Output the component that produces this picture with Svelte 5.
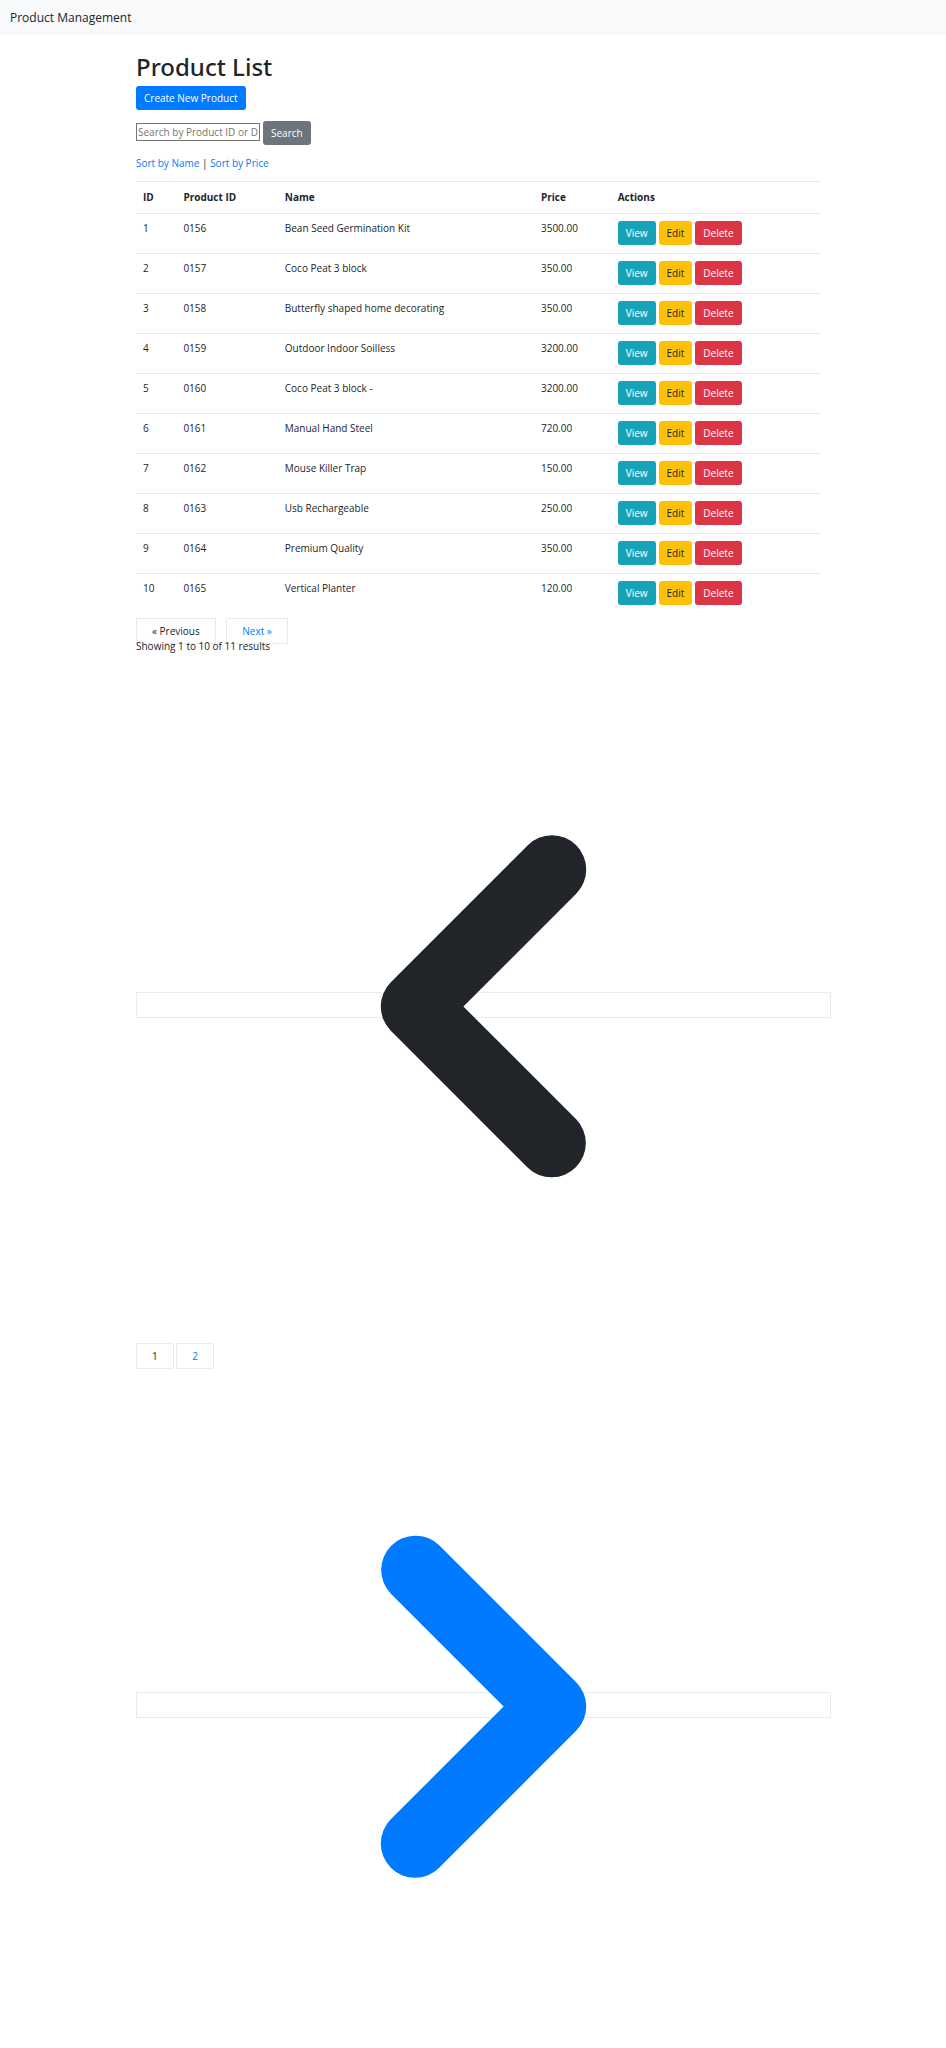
<script>
  const products = [
    { id: 1, code: '0156', name: 'Bean Seed Germination Kit', price: '3500.00' },
    { id: 2, code: '0157', name: 'Coco Peat 3 block', price: '350.00' },
    { id: 3, code: '0158', name: 'Butterfly shaped home decorating', price: '350.00' },
    { id: 4, code: '0159', name: 'Outdoor Indoor Soilless', price: '3200.00' },
    { id: 5, code: '0160', name: 'Coco Peat 3 block -', price: '3200.00' },
    { id: 6, code: '0161', name: 'Manual Hand Steel', price: '720.00' },
    { id: 7, code: '0162', name: 'Mouse Killer Trap', price: '150.00' },
    { id: 8, code: '0163', name: 'Usb Rechargeable', price: '250.00' },
    { id: 9, code: '0164', name: 'Premium Quality', price: '350.00' },
    { id: 10, code: '0165', name: 'Vertical Planter', price: '120.00' }
  ];
  let query = $state('');
</script>

<nav class="navbar"><a class="brand" href="#home">Product Management</a></nav>

<main class="container">
  <h1>Product List</h1>
  <a class="btn primary" href="#create">Create New Product</a>

  <form class="search" onsubmit={(e) => e.preventDefault()}>
    <input type="text" aria-label="Search products" placeholder="Search by Product ID or Description" bind:value={query} />
    <button class="btn secondary" type="submit">Search</button>
  </form>

  <div class="sort"><a href="#name">Sort by Name</a> | <a href="#price">Sort by Price</a></div>

  <table>
    <colgroup>
      <col class="c-id" /><col class="c-code" /><col class="c-name" /><col class="c-price" /><col />
    </colgroup>
    <thead>
      <tr><th>ID</th><th>Product ID</th><th>Name</th><th>Price</th><th>Actions</th></tr>
    </thead>
    <tbody>
      {#each products as p (p.id)}
        <tr>
          <td>{p.id}</td>
          <td>{p.code}</td>
          <td>{p.name}</td>
          <td>{p.price}</td>
          <td>
            <div class="actions">
              <a class="btn info" href="#view">View</a>
              <a class="btn warning" href="#edit">Edit</a>
              <button class="btn danger" type="button">Delete</button>
            </div>
          </td>
        </tr>
      {/each}
    </tbody>
  </table>

  <nav aria-label="Pagination">
    <div>
      <span class="page">« Previous</span>
      <a class="page next" href="#page2">Next »</a>
    </div>
    <p>Showing 1 to 10 of 11 results</p>
    <div>
      <span class="page arrow"><svg viewBox="0 0 20 20" fill="currentColor" aria-hidden="true"><path fill-rule="evenodd" clip-rule="evenodd" d="M12.707 5.293a1 1 0 010 1.414L9.414 10l3.293 3.293a1 1 0 01-1.414 1.414l-4-4a1 1 0 010-1.414l4-4a1 1 0 011.414 0z" /></svg></span>
      <span class="page">1</span>
      <a class="page" href="#page2">2</a>
      <a class="page arrow" href="#page2" aria-label="Next page"><svg viewBox="0 0 20 20" fill="currentColor" aria-hidden="true"><path fill-rule="evenodd" clip-rule="evenodd" d="M7.293 14.707a1 1 0 010-1.414L10.586 10 7.293 6.707a1 1 0 011.414-1.414l4 4a1 1 0 010 1.414l-4 4a1 1 0 01-1.414 0z" /></svg></a>
    </div>
  </nav>
</main>

<style>
  :global(body) {
    margin: 0;
    background: #fff;
    color: #212529;
    font: 10px/15px 'Open Sans', 'Noto Sans', sans-serif;
  }
  a {
    color: #007bff;
    text-decoration: none;
  }
  .navbar {
    padding: 8px 10px;
    background: #f8f9fa;
    font-size: 12px;
    line-height: 19px;
  }
  .brand {
    color: #212529;
  }
  .container {
    padding: 17px 125px 0 136px;
  }
  h1 {
    margin: 0 0 4px;
    font-family: 'Noto Sans', 'Open Sans', sans-serif;
    font-size: 24px;
    font-weight: 500;
    line-height: 30px;
  }
  .btn {
    display: inline-block;
    box-sizing: border-box;
    height: 24px;
    padding: 4px 7px;
    border: 1px solid transparent;
    border-radius: 3px;
    color: #fff;
    font: inherit;
    line-height: 15px;
    vertical-align: top;
  }
  .primary { background: #007bff; }
  .secondary { background: #6c757d; }
  .info { background: #17a2b8; }
  .warning { background: #ffc107; color: #212529; }
  .danger { background: #dc3545; }
  .search {
    display: flex;
    align-items: flex-start;
    gap: 3px;
    margin: 11px 0;
  }
  .search input {
    box-sizing: border-box;
    width: 124px;
    height: 18px;
    margin: 2px 0 0;
    padding: 1px;
    border: 1px solid #767676;
    border-radius: 0;
    font: inherit;
  }
  .search input::placeholder {
    color: #757575;
  }
  .sort {
    margin-bottom: 10px;
  }
  table {
    width: 100%;
    margin-bottom: 11px;
    border-spacing: 0;
    table-layout: fixed;
  }
  .c-id { width: 5.9%; }
  .c-code { width: 14.8%; }
  .c-name { width: 37.4%; }
  .c-price { width: 11.2%; }
  th,
  td {
    padding: 7px 7px 8px;
    border-top: 1px solid #e6e9ec;
    text-align: left;
    vertical-align: top;
  }
  th {
    padding: 8px 7px;
  }
  .actions {
    display: flex;
    gap: 3px;
  }
  p {
    margin: 0 0 10px;
  }
  .page {
    padding: 5px 15px;
    border: 1px solid #e9ecef;
  }
  .next {
    margin-left: 8px;
  }
  .arrow {
    padding: 5px 4px;
  }
  .arrow svg {
    width: 100%;
    vertical-align: middle;
  }
</style>
